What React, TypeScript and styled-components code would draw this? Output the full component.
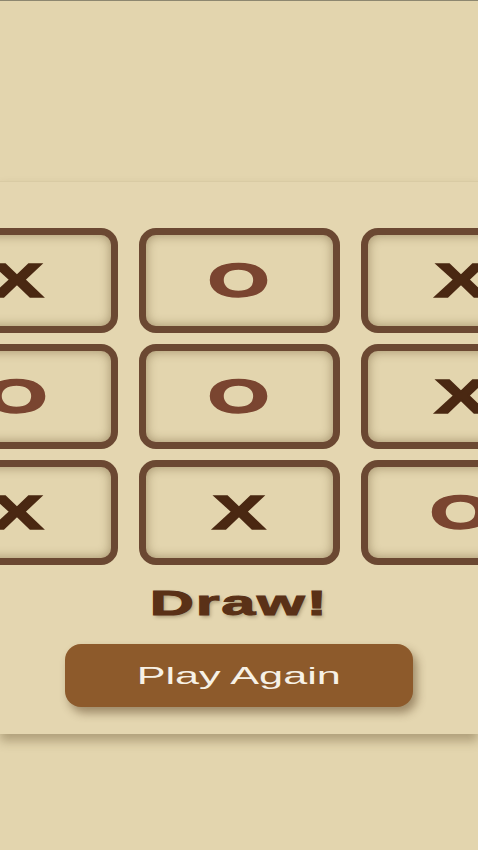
import React, { useState } from "react";
import styled, { createGlobalStyle } from "styled-components";

type Mark = "X" | "O" | null;

const GlobalStyle = createGlobalStyle`
  html, body {
    margin: 0;
    padding: 0;
    background-color: #e3d5ae;
    overflow: hidden;
  }

  * {
    box-sizing: border-box;
  }
`;

const Screen = styled.div`
  display: flex;
  flex-direction: column;
  width: 100%;
  height: 850px;
  padding-top: 180px;
  border-top: 1px solid #8d8770;
  background-color: #e3d5ae;
  font-family: "Liberation Sans", Arial, sans-serif;
`;

const BoardCard = styled.div`
  display: flex;
  flex-direction: column;
  align-items: center;
  width: 100%;
  padding: 46px 0 27px;
  background-color: #e4d6b0;
  border-top: 1px solid #d9cba4;
  box-shadow: 0 7px 10px rgba(80, 60, 25, 0.35);
  overflow: hidden;
`;

const Grid = styled.div`
  display: grid;
  width: 100%;
  grid-template-columns: repeat(3, 201px);
  grid-auto-rows: 105px;
  column-gap: 21px;
  row-gap: 11px;
  justify-content: center;
`;

const Cell = styled.button`
  display: flex;
  align-items: center;
  justify-content: center;
  padding: 0;
  background-color: #e3d5ae;
  border: 7px solid #6b4832;
  border-radius: 17px;
  box-shadow: inset 0 0 11px rgba(70, 45, 10, 0.42);
  cursor: pointer;
  font-family: inherit;
`;

const Glyph = styled.span<{ $mark: Mark }>`
  display: inline-block;
  font-size: 48px;
  font-weight: 700;
  line-height: 1;
  color: ${({ $mark }) => ($mark === "X" ? "#4a2812" : "#7a4530")};
  -webkit-text-stroke: 1.5px ${({ $mark }) => ($mark === "X" ? "#4a2812" : "#7a4530")};
  transform: scaleX(1.65);
`;

const Status = styled.div`
  margin-top: 18px;
  font-size: 35px;
  font-weight: 700;
  line-height: 40px;
  color: #5a3117;
  -webkit-text-stroke: 1px #5a3117;
  letter-spacing: 1px;
  transform: scaleX(1.75);
  text-shadow: 1px 2px 3px rgba(60, 40, 10, 0.35);
`;

const PlayButton = styled.button`
  display: flex;
  align-items: center;
  justify-content: center;
  width: 348px;
  height: 63px;
  margin-top: 21px;
  padding: 0;
  border: none;
  border-radius: 16px;
  background-color: #8d5a2b;
  box-shadow: 4px 6px 10px rgba(70, 45, 15, 0.45);
  cursor: pointer;
  font-family: inherit;
`;

const ButtonLabel = styled.span`
  display: inline-block;
  font-size: 24px;
  line-height: 1;
  color: #f7f1e6;
  transform: scaleX(1.8);
`;

const startBoard: Mark[] = ["X", "O", "X", "O", "O", "X", "X", "X", "O"];

const App: React.FC = () => {
  const [board, setBoard] = useState<Mark[]>(startBoard);

  const handleReset = () => {
    setBoard(Array(9).fill(null));
  };

  return (
    <>
      <GlobalStyle />
      <Screen>
        <BoardCard>
          <Grid>
            {board.map((mark, i) => (
              <Cell key={i}>
                {mark && <Glyph $mark={mark}>{mark}</Glyph>}
              </Cell>
            ))}
          </Grid>
          <Status>Draw!</Status>
          <PlayButton onClick={handleReset}>
            <ButtonLabel>Play Again</ButtonLabel>
          </PlayButton>
        </BoardCard>
      </Screen>
    </>
  );
};

export default App;
